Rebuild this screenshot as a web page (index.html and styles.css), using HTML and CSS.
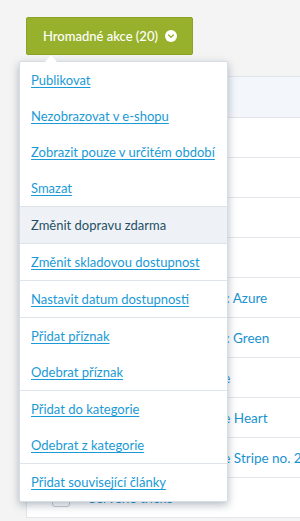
FILE: index.html
```html
<!DOCTYPE html>
<html lang="cs">
<head>
<meta charset="utf-8">
<title>Hromadné akce</title>
<link rel="stylesheet" href="styles.css">
</head>
<body>
<div class="page">
  <div class="toolbar">
    <button class="bulk-btn" type="button">
      <span class="bulk-label">Hromadné akce (20)</span>
      <span class="chev">
        <svg width="12" height="12" viewBox="0 0 12 12"><circle cx="6" cy="6" r="6" fill="#fff"/><path d="M3.6 5 L6 7.3 L8.4 5" fill="none" stroke="#97b12c" stroke-width="1.3" stroke-linecap="round" stroke-linejoin="round"/></svg>
      </span>
    </button>
    <div class="menu">
      <span class="menu-arrow"></span>
      <ul class="group">
        <li><a href="#">Publikovat</a></li>
        <li><a href="#">Nezobrazovat v e-shopu</a></li>
        <li><a href="#">Zobrazit pouze v určitém období</a></li>
        <li><a href="#">Smazat</a></li>
      </ul>
      <ul class="group">
        <li class="active"><span>Změnit dopravu zdarma</span></li>
      </ul>
      <ul class="group">
        <li><a href="#">Změnit skladovou dostupnost</a></li>
      </ul>
      <ul class="group">
        <li><a href="#">Nastavit datum dostupnosti</a></li>
      </ul>
      <ul class="group">
        <li><a href="#">Přidat příznak</a></li>
        <li><a href="#">Odebrat příznak</a></li>
      </ul>
      <ul class="group">
        <li><a href="#">Přidat do kategorie</a></li>
        <li><a href="#">Odebrat z kategorie</a></li>
      </ul>
      <ul class="group">
        <li><a href="#">Přidat související články</a></li>
      </ul>
    </div>
  </div>

  <div class="table">
    <div class="thead"></div>
    <div class="row"><span class="cb"></span><span class="name">Tričko Basic</span></div>
    <div class="row"><span class="cb"></span><span class="name">Tričko Polo</span></div>
    <div class="row"><span class="cb"></span><span class="name">Mikina Zip</span></div>
    <div class="row"><span class="cb"></span><span class="name">Tričko V-neck</span></div>
    <div class="row"><span class="cb"></span><span class="name">Pánské tričko Eco Color: Azure</span></div>
    <div class="row"><span class="cb"></span><span class="name">Pánské tričko Eco Color: Green</span></div>
    <div class="row"><span class="cb"></span><span class="name">Pánské tričko Eco White</span></div>
    <div class="row"><span class="cb"></span><span class="name">Pánské tričko Eco White Heart</span></div>
    <div class="row"><span class="cb"></span><span class="name">Pánské tričko Eco White Stripe no. 2</span></div>
    <div class="row"><span class="cb"></span><span class="name">Červené tričko</span></div>
  </div>
</div>
</body>
</html>
```
FILE: styles.css
```css
* { box-sizing: border-box; }
html, body { margin: 0; padding: 0; }
body {
  background: #f4f4f4;
  font-family: Lato, "Noto Sans", sans-serif;
  font-size: 13px;
  overflow: hidden;
}
.page {
  padding: 17px 0 0 26px;
}
.toolbar {
  position: relative;
  height: 38px;
}
.bulk-btn {
  display: flex;
  align-items: center;
  justify-content: space-between;
  width: 167px;
  height: 38px;
  padding: 0 15px 0 16px;
  background: #97b12c;
  border: 1px solid #8aa324;
  border-radius: 2px;
  color: #fff;
  font-family: inherit;
  font-size: 13px;
  font-weight: 500;
  white-space: nowrap;
  cursor: pointer;
}
.chev { display: flex; }
.menu {
  position: absolute;
  left: -7px;
  top: 44px;
  width: 209px;
  background: #fff;
  border: 1px solid #d6dde4;
  border-radius: 2px;
  box-shadow: 0 3px 9px rgba(40, 60, 85, 0.35);
  z-index: 10;
  padding-bottom: 1px;
}
.menu-arrow {
  position: absolute;
  left: 25px;
  top: -7px;
  width: 0;
  height: 0;
  border-left: 6px solid transparent;
  border-right: 6px solid transparent;
  border-bottom: 7px solid #fff;
}
.group {
  list-style: none;
  margin: 0;
  padding: 0;
  border-bottom: 1px solid #dfe4ea;
}
.group:last-child { border-bottom: 0; }
.group li {
  height: 36px;
  display: flex;
  align-items: center;
  padding: 0 11px;
  white-space: nowrap;
}
.group a {
  color: #1a9ad6;
  text-decoration: underline;
  text-underline-offset: 2px;
}
.group li.active {
  background: #eef2f6;
  color: #264f66;
}
.table {
  margin-top: 21px;
  background: #fff;
  border-left: 1px solid #e1e5ea;
  border-top: 1px solid #dfe4ea;
}
.thead {
  height: 41px;
  background: #f3f6fa;
  border-bottom: 1px solid #dfe4ea;
}
.row {
  height: 40px;
  display: flex;
  align-items: center;
  border-bottom: 1px solid #e3e7ec;
  padding-left: 25px;
}
.cb {
  flex: none;
  width: 18px;
  height: 18px;
  border: 1px solid #c4cbd2;
  border-radius: 3px;
  background: #fff;
}
.name {
  margin-left: 17px;
  color: #1a93d0;
  font-size: 13.5px;
  white-space: nowrap;
}
```
